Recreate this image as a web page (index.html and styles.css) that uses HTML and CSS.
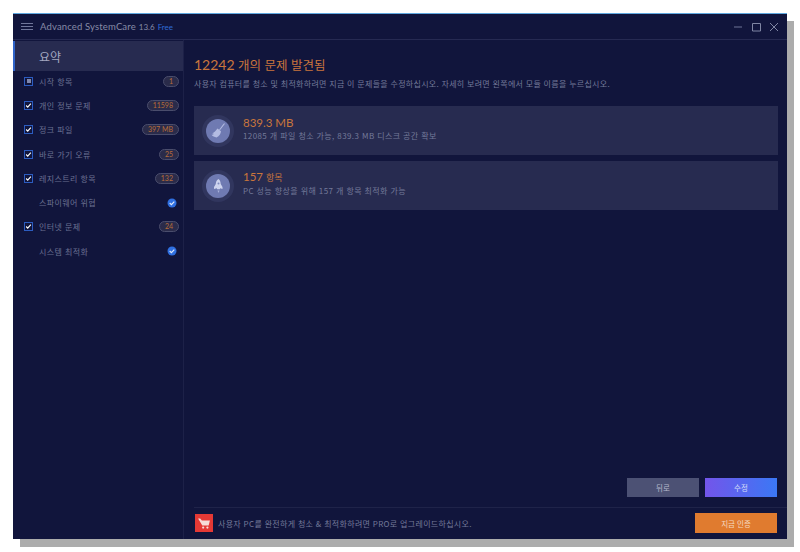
FILE: index.html
```html
<!DOCTYPE html>
<html lang="ko">
<head>
    <meta charset="UTF-8">
    <meta name="viewport" content="width=device-width, initial-scale=1.0">
    <title>Advanced SystemCare</title>
    <link rel="stylesheet" href="styles.css">
</head>
<body>
    <div class="window">
        <header class="titlebar">
            <div class="menu-icon"><span></span><span></span><span></span></div>
            <span class="app-name">Advanced SystemCare</span>
            <span class="app-version">13.6</span>
            <span class="app-free">Free</span>
            <div class="window-controls">
                <svg width="10" height="10" viewBox="0 0 10 10"><path d="M1 5h8" stroke="#6f7596" fill="none"/></svg>
                <svg width="10" height="10" viewBox="0 0 10 10"><path d="M1.500 1.500h8v7.500h-8z" stroke="#7f85a3" fill="none"/></svg>
                <svg width="10" height="10" viewBox="0 0 10 10"><path d="M1 1l8 8M9 1l-8 8" stroke="#7f85a3" fill="none"/></svg>
            </div>
        </header>

        <div class="content">
            <aside class="sidebar">
                <div class="summary-tab">요약</div>
                <ul class="issue-list">
                    <li>
                        <span class="checkbox"><i class="partial"></i></span>
                        <span class="issue-name">시작 항목</span>
                        <span class="badge">1</span>
                    </li>
                    <li>
                        <span class="checkbox"><svg width="9" height="9" viewBox="0 0 9 9"><path d="M1.500 4.500l2 2 4-4.500" stroke="#fff" stroke-width="1.500" fill="none"/></svg></span>
                        <span class="issue-name">개인 정보 문제</span>
                        <span class="badge">11598</span>
                    </li>
                    <li>
                        <span class="checkbox"><svg width="9" height="9" viewBox="0 0 9 9"><path d="M1.500 4.500l2 2 4-4.500" stroke="#fff" stroke-width="1.500" fill="none"/></svg></span>
                        <span class="issue-name">정크 파일</span>
                        <span class="badge">397 MB</span>
                    </li>
                    <li>
                        <span class="checkbox"><svg width="9" height="9" viewBox="0 0 9 9"><path d="M1.500 4.500l2 2 4-4.500" stroke="#fff" stroke-width="1.500" fill="none"/></svg></span>
                        <span class="issue-name">바로 가기 오류</span>
                        <span class="badge">25</span>
                    </li>
                    <li>
                        <span class="checkbox"><svg width="9" height="9" viewBox="0 0 9 9"><path d="M1.500 4.500l2 2 4-4.500" stroke="#fff" stroke-width="1.500" fill="none"/></svg></span>
                        <span class="issue-name">레지스트리 항목</span>
                        <span class="badge">132</span>
                    </li>
                    <li>
                        <span class="checkbox-empty"></span>
                        <span class="issue-name">스파이웨어 위협</span>
                        <svg class="ok-icon" width="10" height="10" viewBox="0 0 10 10"><circle cx="5" cy="5" r="4.500" fill="#2f6fe0"/><path d="M2.700 5l1.700 1.600 2.900-3" stroke="#dfe8fa" stroke-width="1.200" fill="none"/></svg>
                    </li>
                    <li>
                        <span class="checkbox"><svg width="9" height="9" viewBox="0 0 9 9"><path d="M1.500 4.500l2 2 4-4.500" stroke="#fff" stroke-width="1.500" fill="none"/></svg></span>
                        <span class="issue-name">인터넷 문제</span>
                        <span class="badge">24</span>
                    </li>
                    <li>
                        <span class="checkbox-empty"></span>
                        <span class="issue-name">시스템 최적화</span>
                        <svg class="ok-icon" width="10" height="10" viewBox="0 0 10 10"><circle cx="5" cy="5" r="4.500" fill="#2f6fe0"/><path d="M2.700 5l1.700 1.600 2.900-3" stroke="#dfe8fa" stroke-width="1.200" fill="none"/></svg>
                    </li>
                </ul>
            </aside>

            <main class="main">
                <h1><b>12242</b> 개의 문제 발견됨</h1>
                <p class="subtitle">사용자 컴퓨터를 청소 및 최적화하려면 지금 이 문제들을 수정하십시오. 자세히 보려면 왼쪽에서 모듈 이름을 누르십시오.</p>

                <div class="card">
                    <div class="card-icon">
                        <svg width="14" height="15" viewBox="0 0 14 15">
                            <path d="M13.500 .5L8.500 7" stroke="#b4bce2" stroke-width="1.100" fill="none"/>
                            <path d="M6.500 5.500l3.500 2.700c-.2 2.500-1.500 4.700-4.500 6.300-2-.3-4-1.200-5-2.700 1 0 2-.4 2.500-1-.6 0-1.200 0-1.700-.3 2-1 3.500-2.800 5.200-5z" fill="#b4bce2"/>
                        </svg>
                    </div>
                    <div class="card-text">
                        <div class="card-title">839.3 MB</div>
                        <div class="card-desc">12085 개 파일 청소 가능, 839.3 MB 디스크 공간 확보</div>
                    </div>
                </div>

                <div class="card">
                    <div class="card-icon">
                        <svg width="9" height="14" viewBox="0 0 9 14">
                            <path d="M4.500 0c1.600 1.300 2.200 3.200 2.200 5l1.800 3v2l-2.300-.8-.4 1h-2.600l-.4-1L0 10V8l1.800-3c0-1.800.6-3.700 2.700-5z" fill="#cdd3ee"/>
                            <path d="M3.500 11.500h2L4.500 14z" fill="#aab3dc"/>
                            <circle cx="4.500" cy="4.500" r="1" fill="#7f8bc0"/>
                        </svg>
                    </div>
                    <div class="card-text">
                        <div class="card-title">157 <small>항목</small></div>
                        <div class="card-desc">PC 성능 향상을 위해 157 개 항목 최적화 가능</div>
                    </div>
                </div>

                <div class="actions">
                    <button class="btn-back">뒤로</button>
                    <button class="btn-fix">수정</button>
                </div>

                <footer class="upgrade">
                    <div class="cart-icon">
                        <svg width="12" height="11" viewBox="0 0 14 13">
                            <path d="M0 .5h2.500l2 2.500h9.500l-1.500 6h-7.500z" fill="#f6dcd8"/>
                            <circle cx="6" cy="11.300" r="1.300" fill="#f6dcd8"/>
                            <circle cx="11" cy="11.300" r="1.300" fill="#f6dcd8"/>
                        </svg>
                    </div>
                    <p>사용자 PC를 완전하게 청소 &amp; 최적화하려면 PRO로 업그레이드하십시오.</p>
                    <button class="btn-upgrade">지금 인증</button>
                </footer>
            </main>
        </div>
    </div>
</body>
</html>
```

FILE: styles.css
```css
* {
    margin: 0;
    padding: 0;
    box-sizing: border-box;
}

body {
    font-family: 'Noto Sans CJK KR', 'Noto Sans', sans-serif;
    background: #ffffff;
    padding: 13px;
}

button {
    font-family: inherit;
    border: none;
    color: #fff;
}

.window {
    width: 774px;
    height: 526px;
    background: #11153c;
    border-top: 1px solid #5fa8e0;
    box-shadow: 7px 8px 0 #acacac;
    display: flex;
    flex-direction: column;
}

/* title bar */
.titlebar {
    height: 26px;
    flex-shrink: 0;
    display: flex;
    align-items: center;
    padding: 0 8px;
    border-bottom: 1px solid #262a52;
    font-family: 'Lato', sans-serif;
    font-size: 9.500px;
}

.menu-icon {
    width: 12px;
    display: flex;
    flex-direction: column;
    gap: 2px;
    margin-right: 7px;
}

.menu-icon span {
    height: 1px;
    background: #70769a;
}

.app-name {
    color: #868ba6;
    letter-spacing: 0.15px;
}

.app-version {
    color: #868ba6;
    font-size: 8px;
    margin-left: 3px;
}

.app-free {
    color: #2f6bd6;
    font-size: 8px;
    margin-left: 3px;
}

.window-controls {
    margin-left: auto;
    display: flex;
    gap: 8px;
}

.content {
    flex: 1;
    display: flex;
    min-height: 0;
}

/* sidebar */
.sidebar {
    width: 171px;
    flex-shrink: 0;
    border-right: 1px solid #1d2148;
    padding-top: 1px;
}

.summary-tab {
    height: 30px;
    background: #272b50;
    border-left: 2px solid #2f63c8;
    padding-left: 24px;
    display: flex;
    align-items: center;
    font-size: 12px;
    color: #a4a8c0;
}

.issue-list {
    list-style: none;
    margin-top: -2px;
}

.issue-list li {
    height: 24.300px;
    display: flex;
    align-items: center;
    padding: 0 5px 0 11px;
    font-size: 8px;
    color: #6b7192;
}

.checkbox,
.checkbox-empty {
    width: 9px;
    height: 9px;
    flex-shrink: 0;
    margin-right: 6px;
}

.checkbox {
    border: 1px solid #2c5cc0;
    display: flex;
    align-items: center;
    justify-content: center;
}

.checkbox .partial {
    width: 4px;
    height: 4px;
    background: #7f87ad;
}

.checkbox svg {
    width: 7px;
    height: 7px;
}

.issue-name {
    flex: 1;
    letter-spacing: 0.4px;
}

.badge {
    height: 11px;
    margin-right: -1px;
    padding: 0 5px;
    border: 1px solid #4a4d6c;
    border-radius: 6px;
    background: #2a2b4a;
    color: #b86c38;
    font-size: 7px;
    line-height: 9px;
    font-family: 'Lato', sans-serif;
}

.ok-icon {
    margin-right: 1px;
}

/* main panel */
.main {
    flex: 1;
    padding: 16px 9px 0 10px;
    display: flex;
    flex-direction: column;
}

h1 {
    font-size: 12.500px;
    font-weight: 400;
    color: #c9763c;
    line-height: 18px;
}

h1 b {
    font-size: 14px;
    font-weight: 400;
    font-family: 'Lato', sans-serif;
}

.subtitle {
    font-size: 8px;
    letter-spacing: 0.3px;
    color: #747a9a;
    line-height: 12px;
    margin-top: 4px;
    margin-bottom: 16px;
    white-space: nowrap;
}

.card {
    height: 49px;
    background: #272b50;
    display: flex;
    align-items: center;
    padding-left: 12px;
    margin-bottom: 6px;
}

.card-icon {
    width: 24px;
    height: 24px;
    flex-shrink: 0;
    border-radius: 50%;
    background: #6f7ab2;
    box-shadow: 0 0 0 4px #31365e;
    margin-right: 13px;
    display: flex;
    align-items: center;
    justify-content: center;
}

.card-text {
    margin-top: -4px;
}

.card-title {
    font-family: 'Lato', sans-serif;
    font-size: 11.500px;
    line-height: 14px;
    color: #c9763c;
}

.card-title small {
    font-family: 'Noto Sans CJK KR', sans-serif;
    font-size: 9px;
}

.card-desc {
    font-size: 8px;
    letter-spacing: 0.4px;
    line-height: 12px;
    color: #747a9a;
}

.actions {
    margin-top: auto;
    display: flex;
    justify-content: flex-end;
    gap: 6px;
    padding-right: 1px;
    margin-bottom: 10px;
}

.actions button {
    width: 72px;
    height: 19px;
    font-size: 7.500px;
}

.btn-back {
    background: #4c5174;
    color: #b5b9cc;
}

.btn-fix {
    background: linear-gradient(90deg, #7355ea, #3b78f5);
    color: #d5dcf8;
}

.upgrade {
    height: 32px;
    margin-right: -9px;
    padding: 0 10px 1px 1px;
    border-top: 1px solid #1f2349;
    display: flex;
    align-items: center;
    gap: 5px;
}

.cart-icon {
    width: 18px;
    height: 18px;
    background: #e53935;
    display: flex;
    align-items: center;
    justify-content: center;
}

.upgrade p {
    flex: 1;
    font-size: 8px;
    color: #747a9a;
    letter-spacing: 0.32px;
}

.btn-upgrade {
    width: 82px;
    height: 20px;
    background: #e07b2f;
    color: #f4d8c0;
    font-size: 7.500px;
}
```
